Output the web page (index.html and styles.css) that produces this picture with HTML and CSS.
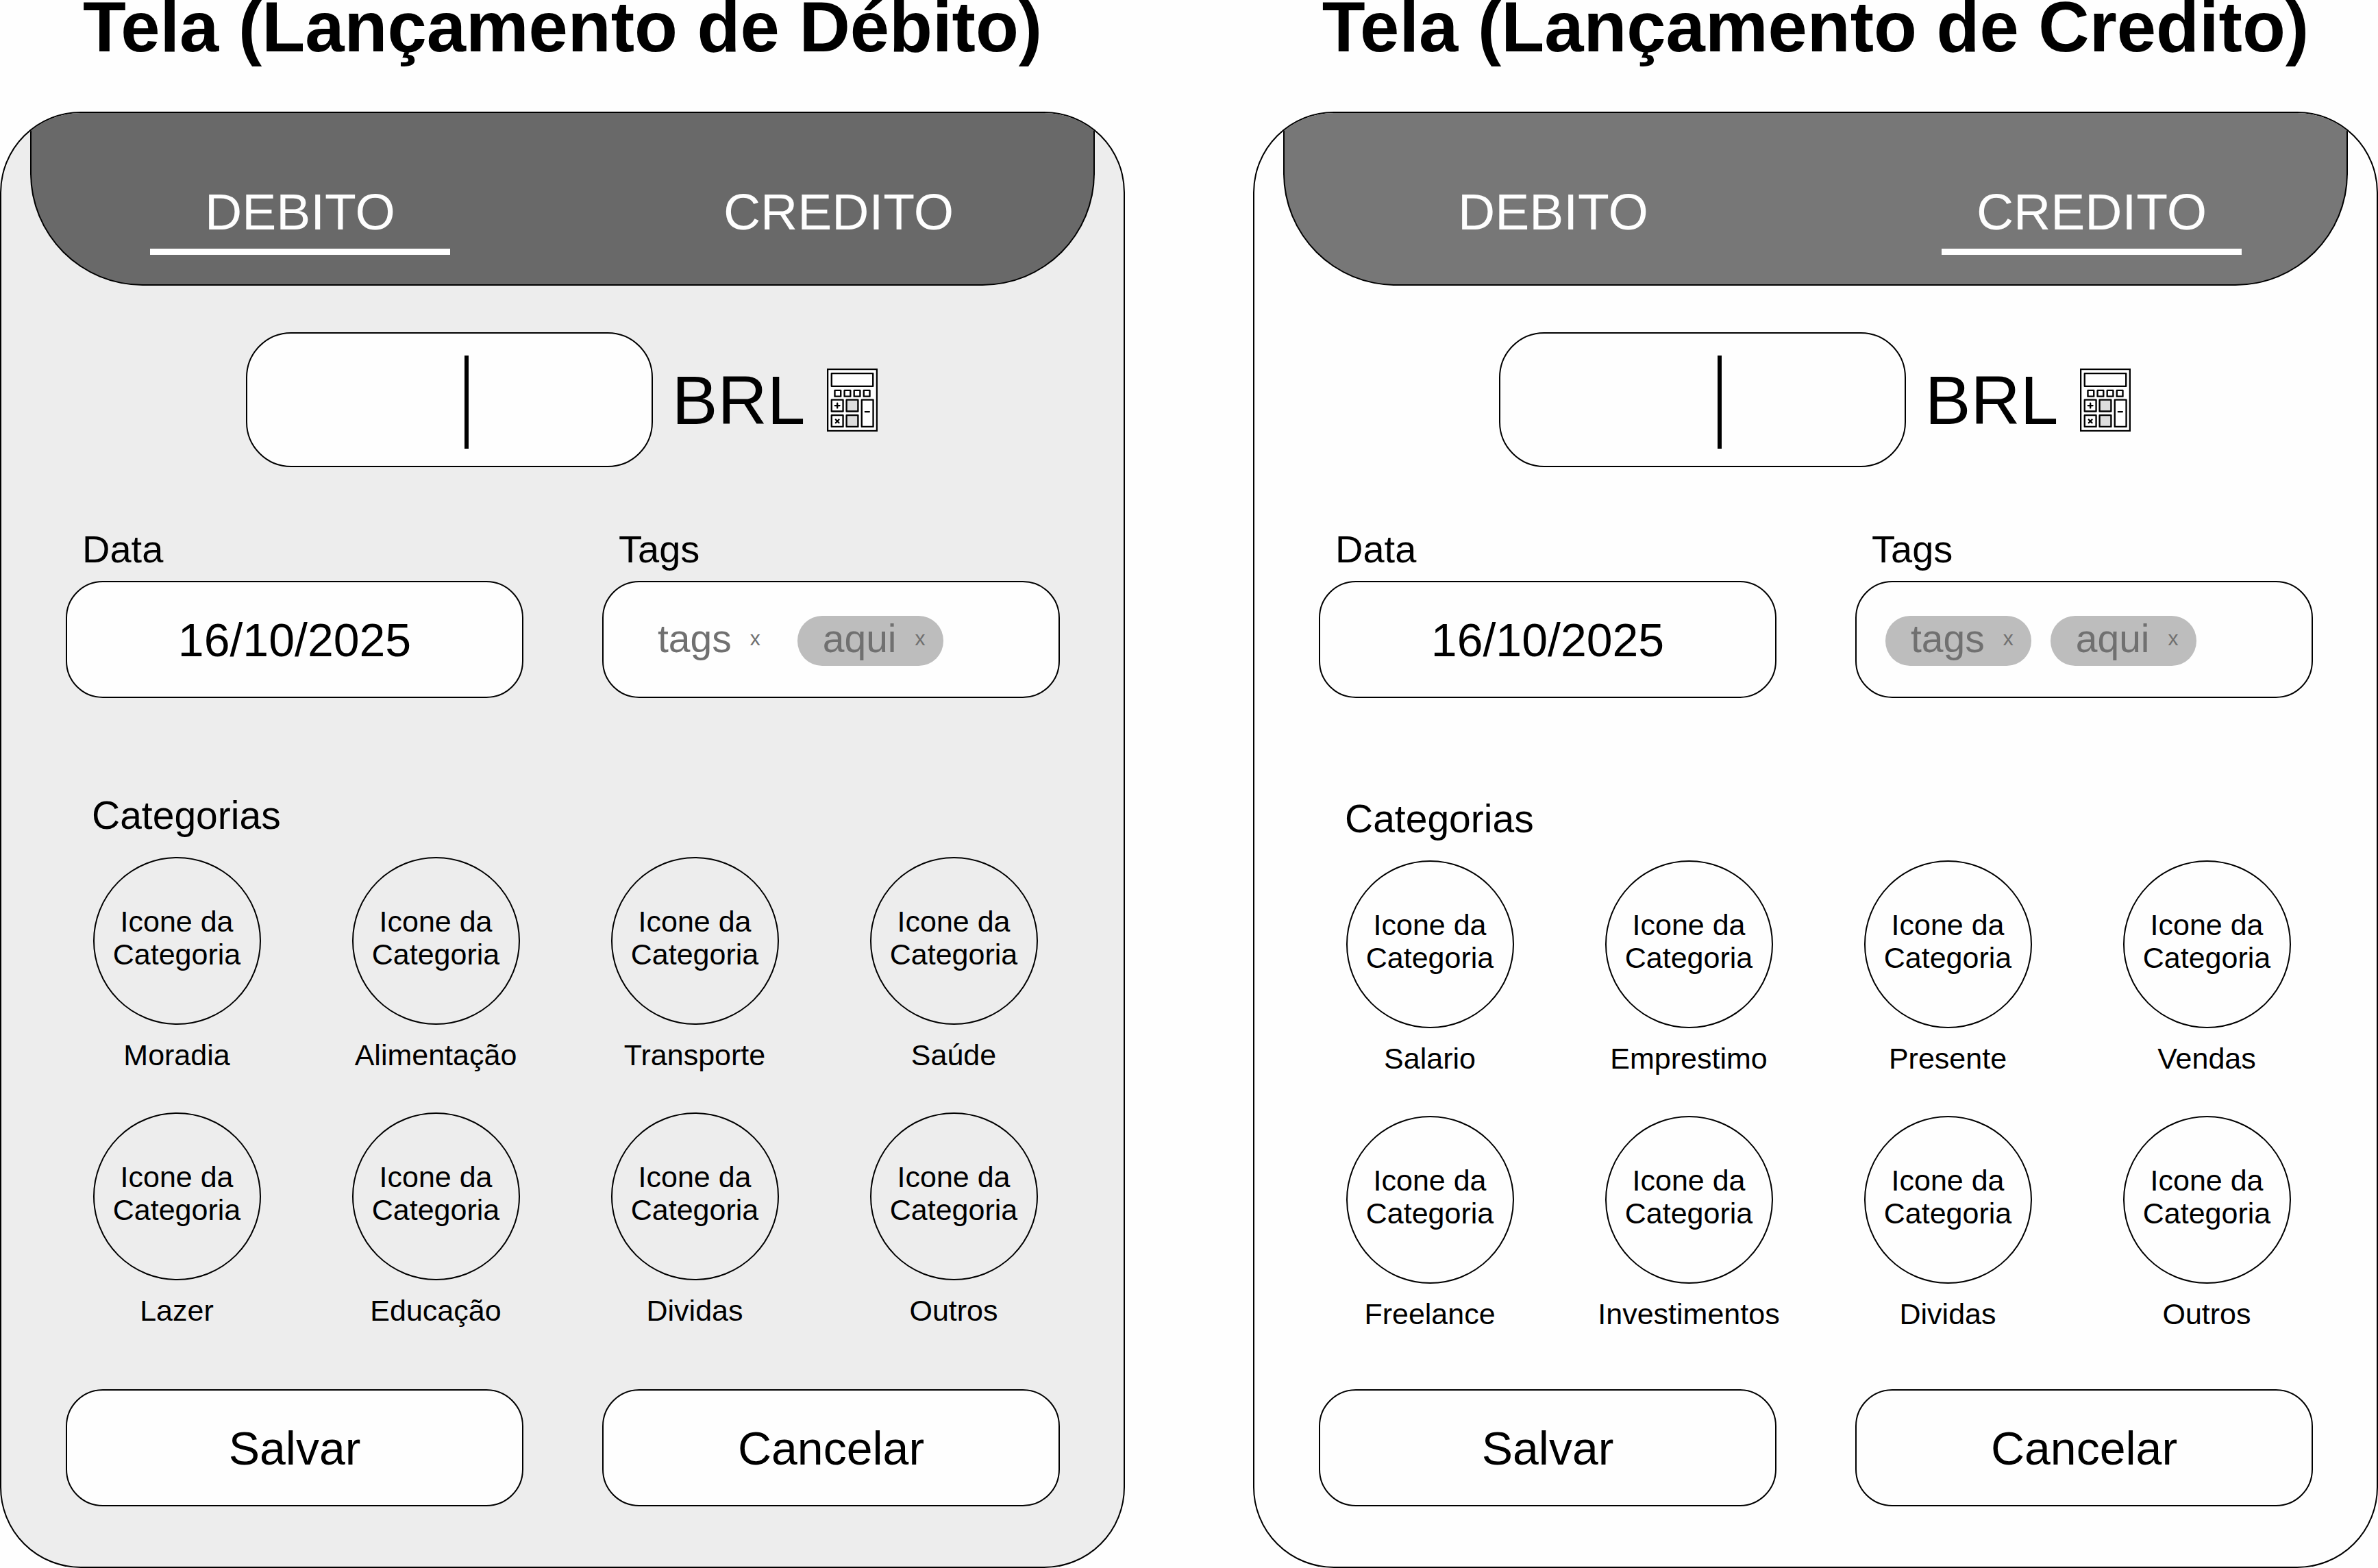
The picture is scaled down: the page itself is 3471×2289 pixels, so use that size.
FILE: index.html
```html
<!DOCTYPE html>
<html lang="pt-BR">
<head>
<meta charset="utf-8">
<meta name="viewport" content="width=device-width, initial-scale=1">
<title>Telas de Lançamento</title>
<link rel="stylesheet" href="styles.css">
</head>
<body>
<svg class="sprite" aria-hidden="true">
  <symbol id="calculadora" viewBox="87 53 220 274">
    <g stroke="#000" stroke-width="7" stroke-linejoin="round" stroke-linecap="round" fill="#fff">
      <rect x="90" y="56" width="214" height="268" stroke-linejoin="miter"/>
      <rect x="107" y="74" width="180" height="56"/>
      <rect x="121" y="148" width="26" height="26"/>
      <rect x="163" y="148" width="26" height="26"/>
      <rect x="205" y="148" width="26" height="26"/>
      <rect x="247" y="148" width="26" height="26"/>
      <rect x="107" y="189" width="50" height="50"/>
      <rect x="172" y="189" width="50" height="50" fill="#ddd"/>
      <rect x="107" y="256" width="50" height="50"/>
      <rect x="172" y="256" width="50" height="50" fill="#ddd"/>
      <rect x="238" y="189" width="50" height="117"/>
      <path d="M122 214h20M132 204v20M125 275l14 14M139 275l-14 14M253 241h18"/>
    </g>
  </symbol>
</svg>
<main class="telas">
  <section class="tela">
    <h1 class="titulo">Tela (Lançamento de Débito)</h1>
    <form class="painel painel--debito">
      <nav class="abas">
        <button type="button" class="aba aba--ativa">DEBITO</button>
        <button type="button" class="aba">CREDITO</button>
      </nav>
      <div class="valor">
        <div class="valor__campo">
          <input class="caixa valor__input" type="text" inputmode="decimal" aria-label="Valor">
          <span class="cursor"></span>
        </div>
        <span class="moeda">BRL</span>
        <button type="button" class="calc" aria-label="Calculadora"><svg class="calc__icone"><use href="#calculadora"/></svg></button>
      </div>
      <div class="campos">
        <div class="campo">
          <label class="rotulo" for="data-debito">Data</label>
          <input class="caixa data" id="data-debito" type="text" value="16/10/2025">
        </div>
        <div class="campo">
          <span class="rotulo" id="tags-debito">Tags</span>
          <div class="caixa tags" role="group" aria-labelledby="tags-debito">
            <span class="tag tag--simples">tags<button type="button" class="tag__x" aria-label="Remover tags">x</button></span>
            <span class="tag">aqui<button type="button" class="tag__x" aria-label="Remover aqui">x</button></span>
          </div>
        </div>
      </div>
      <h2 class="subtitulo">Categorias</h2>
      <ul class="categorias">
        <li class="categoria"><button type="button" class="icone">Icone da Categoria</button><span>Moradia</span></li>
        <li class="categoria"><button type="button" class="icone">Icone da Categoria</button><span>Alimentação</span></li>
        <li class="categoria"><button type="button" class="icone">Icone da Categoria</button><span>Transporte</span></li>
        <li class="categoria"><button type="button" class="icone">Icone da Categoria</button><span>Saúde</span></li>
        <li class="categoria"><button type="button" class="icone">Icone da Categoria</button><span>Lazer</span></li>
        <li class="categoria"><button type="button" class="icone">Icone da Categoria</button><span>Educação</span></li>
        <li class="categoria"><button type="button" class="icone">Icone da Categoria</button><span>Dividas</span></li>
        <li class="categoria"><button type="button" class="icone">Icone da Categoria</button><span>Outros</span></li>
      </ul>
      <div class="acoes">
        <button type="submit" class="caixa">Salvar</button>
        <button type="button" class="caixa">Cancelar</button>
      </div>
    </form>
  </section>

  <section class="tela">
    <h1 class="titulo">Tela (Lançamento de Credito)</h1>
    <form class="painel painel--credito">
      <nav class="abas">
        <button type="button" class="aba">DEBITO</button>
        <button type="button" class="aba aba--ativa">CREDITO</button>
      </nav>
      <div class="valor">
        <div class="valor__campo">
          <input class="caixa valor__input" type="text" inputmode="decimal" aria-label="Valor">
          <span class="cursor"></span>
        </div>
        <span class="moeda">BRL</span>
        <button type="button" class="calc" aria-label="Calculadora"><svg class="calc__icone"><use href="#calculadora"/></svg></button>
      </div>
      <div class="campos">
        <div class="campo">
          <label class="rotulo" for="data-credito">Data</label>
          <input class="caixa data" id="data-credito" type="text" value="16/10/2025">
        </div>
        <div class="campo">
          <span class="rotulo" id="tags-credito">Tags</span>
          <div class="caixa tags" role="group" aria-labelledby="tags-credito">
            <span class="tag">tags<button type="button" class="tag__x" aria-label="Remover tags">x</button></span>
            <span class="tag">aqui<button type="button" class="tag__x" aria-label="Remover aqui">x</button></span>
          </div>
        </div>
      </div>
      <h2 class="subtitulo">Categorias</h2>
      <ul class="categorias">
        <li class="categoria"><button type="button" class="icone">Icone da Categoria</button><span>Salario</span></li>
        <li class="categoria"><button type="button" class="icone">Icone da Categoria</button><span>Emprestimo</span></li>
        <li class="categoria"><button type="button" class="icone">Icone da Categoria</button><span>Presente</span></li>
        <li class="categoria"><button type="button" class="icone">Icone da Categoria</button><span>Vendas</span></li>
        <li class="categoria"><button type="button" class="icone">Icone da Categoria</button><span>Freelance</span></li>
        <li class="categoria"><button type="button" class="icone">Icone da Categoria</button><span>Investimentos</span></li>
        <li class="categoria"><button type="button" class="icone">Icone da Categoria</button><span>Dividas</span></li>
        <li class="categoria"><button type="button" class="icone">Icone da Categoria</button><span>Outros</span></li>
      </ul>
      <div class="acoes">
        <button type="submit" class="caixa">Salvar</button>
        <button type="button" class="caixa">Cancelar</button>
      </div>
    </form>
  </section>
</main>
</body>
</html>
```
FILE: styles.css
```css
*, *::before, *::after { box-sizing: border-box; }

body {
  margin: 0;
  background: #fefefe;
  color: #000;
  font-family: "Liberation Sans", Arial, sans-serif;
}

button, input {
  margin: 0;
  padding: 0;
  border: 0;
  background: none;
  color: inherit;
  font: inherit;
}

.sprite { display: none; }

.telas {
  display: grid;
  grid-template-columns: 1fr 1fr;
  gap: 187px;
}

.titulo {
  margin: 0 0 83px;
  font-size: 103px;
  line-height: 80px;
  font-weight: bold;
  text-align: center;
  white-space: nowrap;
}

.painel {
  border: 2px solid #000;
  border-radius: 118px;
  padding-bottom: 88px;
  overflow: hidden;
}

.painel--debito { --cabecalho: #696969; background: #ededed; }
.painel--credito { --cabecalho: #777; background: #fefefe; }

/* Cabeçalho com as abas */
.abas {
  display: flex;
  justify-content: space-between;
  margin: 0 42px;
  padding: 106px 153px 43px 173px;
  border: 2px solid #000;
  border-top: 0;
  border-radius: 0 0 164px 164px;
  background: var(--cabecalho);
}

.aba {
  width: 438px;
  padding-bottom: 16px;
  border-bottom: 9px solid transparent;
  color: #fefefe;
  font-size: 75px;
  line-height: 76px;
}

.aba--ativa { border-bottom-color: #fefefe; }

.caixa {
  width: 100%;
  height: 171px;
  border: 2px solid #000;
  border-radius: 54px;
  background: #fefefe;
  font-size: 68px;
  text-align: center;
}

/* Valor do lançamento */
.valor {
  display: flex;
  justify-content: center;
  align-items: center;
  gap: 28px;
  margin-top: 68px;
  padding-left: 2px;
}

.valor__campo { position: relative; width: 594px; }

.valor__input { display: block; height: 197px; border-radius: 66px; }

.cursor {
  position: absolute;
  top: 34px;
  left: 319px;
  width: 6px;
  height: 136px;
  background: #000;
}

.moeda { font-size: 100px; line-height: 112px; }

.calc { padding: 0 4px; }

.calc__icone { display: block; width: 74px; height: 92px; }

/* Data e tags */
.campos, .acoes {
  display: grid;
  grid-template-columns: 1fr 1fr;
  gap: 115px;
  padding: 0 93px 0 94px;
}

.campos { margin-top: 88px; }

.rotulo {
  display: block;
  margin-bottom: 15px;
  padding-left: 24px;
  font-size: 56px;
  line-height: 63px;
}

.data { display: block; }

.tags {
  display: flex;
  align-items: center;
  gap: 28px;
  padding: 4px 42px 0;
}

.tag {
  display: flex;
  align-items: center;
  gap: 27px;
  height: 73px;
  padding: 0 26px 8px 37px;
  border-radius: 36px;
  background: #bdbdbd;
  color: #707070;
  font-size: 57px;
  line-height: 64px;
}

.tag--simples { background: none; }

.tag__x { font-size: 30px; line-height: 32px; }

/* Categorias */
.subtitulo {
  margin: 139px 0 29px;
  padding-left: 132px;
  font-size: 57px;
  line-height: 64px;
  font-weight: normal;
}

.painel--credito .subtitulo { margin-top: 144px; }

.categorias {
  display: grid;
  grid-template-columns: repeat(4, 1fr);
  row-gap: 60px;
  margin: 0 0 91px;
  padding: 0 59px 0 67px;
  list-style: none;
}

.painel--credito .categorias { margin-bottom: 86px; }

.categoria {
  display: flex;
  flex-direction: column;
  align-items: center;
  gap: 20px;
  font-size: 43px;
  line-height: 48px;
}

.icone {
  width: 245px;
  height: 245px;
  padding: 0 20px 10px;
  border: 2px solid #000;
  border-radius: 50%;
}
```
